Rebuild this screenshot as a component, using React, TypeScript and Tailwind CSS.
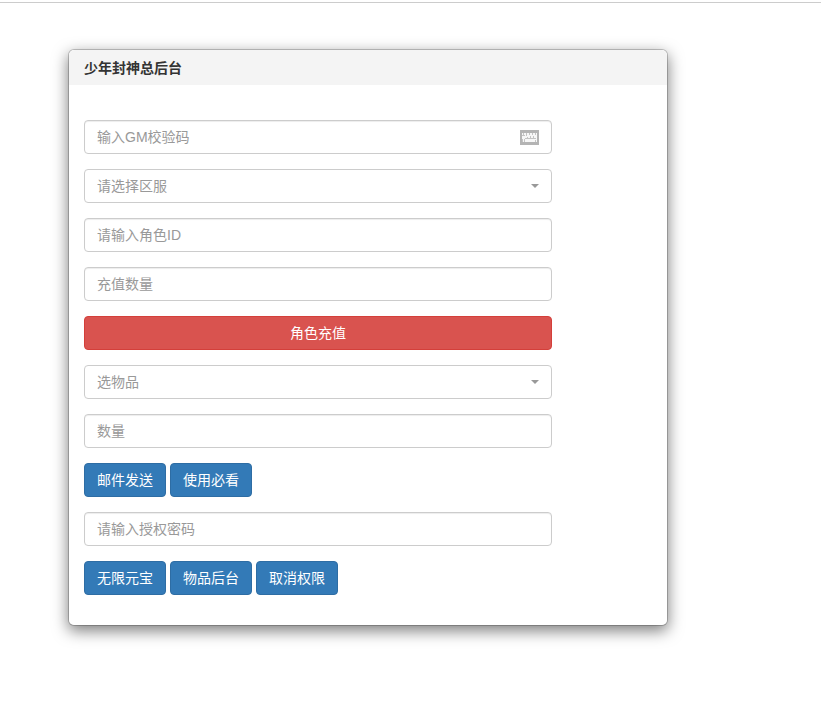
import type { InputHTMLAttributes, ReactNode } from 'react'

const fieldClass =
  'block h-[34px] w-full rounded border border-[#ccc] bg-white px-3 text-sm text-[#555] placeholder:text-[#999] outline-none focus:border-[#66afe9]'

function KeyboardIcon() {
  return (
    <svg
      viewBox="0 0 19 15"
      className="pointer-events-none absolute top-[10px] right-[13px] h-[15px] w-[19px]"
      aria-hidden="true"
    >
      <rect width="19" height="15" fill="#b4b4b4" />
      <path fill="#f7f7f7" d="M2 3h15v9H2z" />
      <path
        fill="#c4c4c4"
        d="M3 3h1v2h-1zM6 3h1v3h-1zM9 3h1v2h-1zM12 3h1v2h-1zM15 3h1v2h-1zM2 5h3v1h-3zM7 7h1v2h-1zM10 6h1v2h-1zM13 6h1v2h-1zM5 8h11v1h-11zM2 9h1v3h-1zM4 9h1v3h-1zM15 10h1v2h-1z"
      />
    </svg>
  )
}

type FieldProps = InputHTMLAttributes<HTMLInputElement> & {
  label: string
  icon?: ReactNode
}

function Field({ label, icon, ...props }: FieldProps) {
  return (
    <div className="relative">
      <input
        aria-label={label}
        placeholder={label}
        className={`${fieldClass} shadow-[inset_0_1px_1px_rgba(0,0,0,0.075)]`}
        {...props}
      />
      {icon}
    </div>
  )
}

function SelectField({ label, name }: { label: string; name: string }) {
  return (
    <div className="relative">
      <select
        aria-label={label}
        name={name}
        defaultValue=""
        className={`${fieldClass} appearance-none text-[#999]`}
      >
        <option value="">{label}</option>
      </select>
      <svg
        viewBox="0 0 8 4"
        className="pointer-events-none absolute top-[15px] right-[13px] h-1 w-2"
        aria-hidden="true"
      >
        <path d="M0 0h8L4 4z" fill="#999" />
      </svg>
    </div>
  )
}

function ButtonRow({ labels }: { labels: string[] }) {
  return (
    <div className="flex flex-wrap gap-1">
      {labels.map((label) => (
        <button
          key={label}
          type="button"
          className="h-[34px] rounded border border-[#2e6da4] bg-[#337ab7] px-3 text-sm text-white hover:bg-[#286090]"
        >
          {label}
        </button>
      ))}
    </div>
  )
}

export default function App() {
  return (
    <div className="min-h-screen bg-white pt-0.5 font-['Liberation_Sans','Noto_Sans_CJK_SC',sans-serif] text-sm text-[#333]">
      <div className="border-t border-[#ccc]" />
      <main className="mt-[46px] mr-4 mb-8 ml-[68px] max-w-[600px] rounded-md border border-black/20 bg-white bg-clip-padding shadow-[0_5px_15px_rgba(0,0,0,0.5)]">
        <header className="rounded-t-md bg-[#f4f4f4] px-[15px] pt-0.5">
          <h1 className="text-sm leading-[33px] font-bold">少年封神总后台</h1>
        </header>
        <form
          className="mr-[115px] ml-[15px] flex flex-col gap-[15px] pt-[35px] pb-[30px]"
          onSubmit={(e) => e.preventDefault()}
        >
          <Field label="输入GM校验码" name="code" type="password" icon={<KeyboardIcon />} />
          <SelectField label="请选择区服" name="server" />
          <Field label="请输入角色ID" name="role" />
          <Field label="充值数量" name="amount" />
          <button
            type="button"
            className="h-[34px] w-full rounded border border-[#d43f3a] bg-[#d9534f] px-3 text-sm text-white hover:bg-[#c9302c]"
          >
            角色充值
          </button>
          <SelectField label="选物品" name="item" />
          <Field label="数量" name="count" />
          <ButtonRow labels={['邮件发送', '使用必看']} />
          <Field label="请输入授权密码" name="auth" type="password" />
          <ButtonRow labels={['无限元宝', '物品后台', '取消权限']} />
        </form>
      </main>
    </div>
  )
}
